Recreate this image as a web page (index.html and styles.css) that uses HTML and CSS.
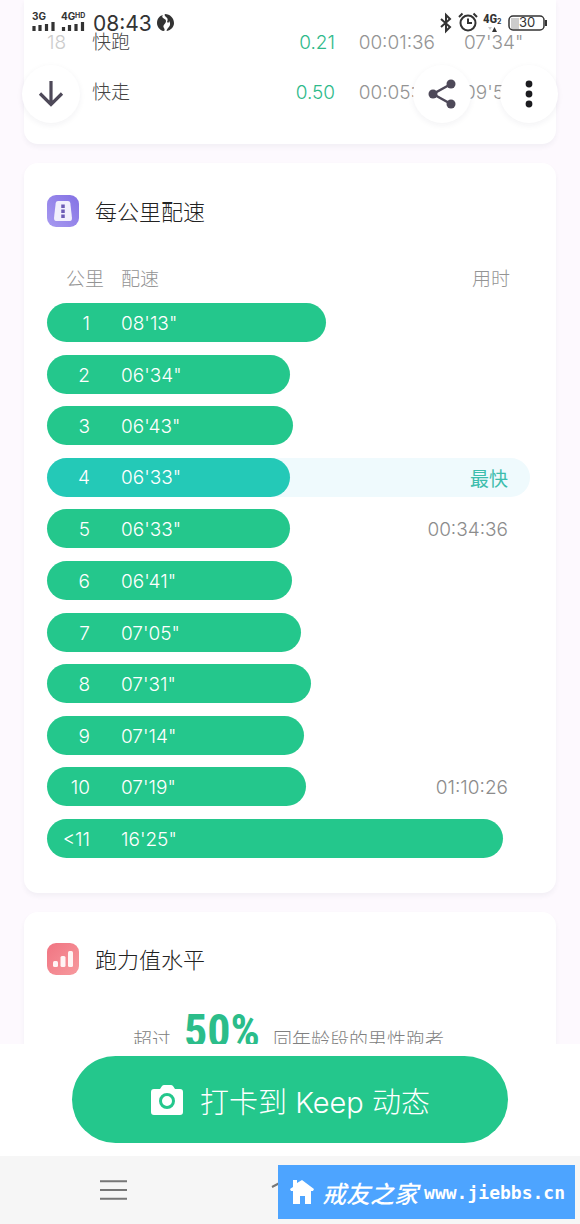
FILE: index.html
```html
<!DOCTYPE html>
<html lang="zh-CN">
<head>
<meta charset="utf-8">
<meta name="viewport" content="width=device-width, initial-scale=1">
<title>每公里配速</title>
<link rel="stylesheet" href="styles.css">
</head>
<body>
<div class="app">
  <header class="status">
    <svg class="signal" viewBox="0 0 56 22" aria-hidden="true">
      <text x="0" y="8" class="signal-text">3G</text>
      <text x="29" y="8" class="signal-text">4G</text>
      <text x="43" y="6" class="signal-sup">HD</text>
      <path d="M2 19v-5M8 19v-6M14.500 19v-7M21 19v-9M31.500 19v-4M37.500 19v-6M44 19v-7M50.500 19v-9" stroke="#333" stroke-width="3.200" stroke-linecap="butt"/>
    </svg>
    <span class="clock">08:43</span>
    <svg class="flame" viewBox="0 0 18 18" aria-hidden="true"><path d="M6 1C2 2 0 5 0 9c0 4 3 7 6 8 2 0 2-1 1-3-2-3 2-4 2-7 0-2-2-2-3-3-1-1-1-2 0-3z" fill="#333"/><path d="M8 0c5 0 9 4 9 9 0 4-3 7-7 8-1 0 0-2 1-3 2-2 3-4 1-7 0 2-1 2-2 1 1-2 1-4-1-5C8 2 7 1 8 0z" fill="#333"/></svg>
    <div class="status-right">
      <svg width="14" height="20" viewBox="0 0 14 20" aria-hidden="true"><path d="M2 6l9 8-4 4V2l4 4-9 8" fill="none" stroke="#333" stroke-width="2"/></svg>
      <svg width="20" height="20" viewBox="0 0 20 20" aria-hidden="true"><g fill="none" stroke="#333" stroke-width="2"><circle cx="10" cy="10" r="7.500"/><path d="M10 5.500V10h4M1 4l3.500-3.500M19 4L15.500.500"/></g></svg>
      <svg width="20" height="20" viewBox="0 0 20 20" aria-hidden="true"><text x="0" y="10" class="net-text">4G</text><text x="14" y="11" class="net-sub">2</text><path d="M9 19l2.500-5 2.500 5z" fill="#333"/><path d="M5 14h4l-2 3z" fill="#ccc"/></svg>
      <svg width="40" height="20" viewBox="0 0 40 20" aria-hidden="true"><rect x="3" y="5" width="8" height="11" fill="#ccc"/><rect x="1" y="3" width="35" height="14" rx="4" fill="none" stroke="#333" stroke-width="1.500"/><path d="M38 7v6" stroke="#333" stroke-width="2"/><text x="11" y="14" class="battery-text">30</text></svg>
    </div>
  </header>

  <nav class="toolbar">
    <button class="round" aria-label="收起"><svg viewBox="0 0 30 30"><path d="M15 2v23M4 14.500l11 11 11-11" fill="none" stroke="#4e4959" stroke-width="3.200"/></svg></button>
    <span class="spacer"></span>
    <button class="round" aria-label="分享"><svg viewBox="0 0 30 30"><path d="M24 5L6 15l18 10" fill="none" stroke="#4e4959" stroke-width="2.500"/><g fill="#4e4959"><circle cx="24" cy="5" r="4.500"/><circle cx="6" cy="15" r="4.500"/><circle cx="24" cy="25" r="4.500"/></g></svg></button>
    <button class="round" aria-label="更多"><svg viewBox="0 0 30 30"><g fill="#1c1c20"><circle cx="15" cy="5" r="3.400"/><circle cx="15" cy="15" r="3.400"/><circle cx="15" cy="25" r="3.400"/></g></svg></button>
  </nav>

  <main class="content">
    <section class="card segments">
      <table class="segment-table">
        <tr><td class="seg-no">18</td><td class="seg-name">快跑</td><td class="seg-km">0.21</td><td class="seg-time">00:01:36</td><td class="seg-pace">07'34"</td></tr>
        <tr><td class="seg-no"></td><td class="seg-name">快走</td><td class="seg-km">0.50</td><td class="seg-time">00:05:21</td><td class="seg-pace">09'56"</td></tr>
      </table>
    </section>

    <section class="card">
      <h2 class="title">
        <svg viewBox="0 0 32 32" aria-hidden="true"><defs><linearGradient id="violet" x1="0" y1="1" x2="1" y2="0"><stop offset="0" stop-color="#a79af0"/><stop offset="1" stop-color="#8471e4"/></linearGradient></defs><rect width="32" height="32" rx="9" fill="url(#violet)"/><path d="M11 6h10q2 0 2.300 2L25 23q0 3-2 3H9q-2 0-2-3L8.700 8Q9 6 11 6z" fill="#f1effc"/><path d="M16 9.500v3.500M16 14.500V18M16 19.500V23" stroke="#6c5cb5" stroke-width="3.500"/></svg>
        <span>每公里配速</span>
      </h2>
      <table class="pace">
        <thead><tr><th class="km">公里</th><th class="speed">配速</th><th class="time">用时</th></tr></thead>
        <tbody>
          <tr><td class="km"><i class="bar" style="width:57.8%"></i>1</td><td class="speed">08'13"</td><td class="time"></td></tr>
          <tr><td class="km"><i class="bar" style="width:50.3%"></i>2</td><td class="speed">06'34"</td><td class="time"></td></tr>
          <tr><td class="km"><i class="bar" style="width:51%"></i>3</td><td class="speed">06'43"</td><td class="time"></td></tr>
          <tr class="fastest"><td class="km"><i class="bar" style="width:50.3%"></i>4</td><td class="speed">06'33"</td><td class="time">最快</td></tr>
          <tr><td class="km"><i class="bar" style="width:50.3%"></i>5</td><td class="speed">06'33"</td><td class="time">00:34:36</td></tr>
          <tr><td class="km"><i class="bar" style="width:50.8%"></i>6</td><td class="speed">06'41"</td><td class="time"></td></tr>
          <tr><td class="km"><i class="bar" style="width:52.6%"></i>7</td><td class="speed">07'05"</td><td class="time"></td></tr>
          <tr><td class="km"><i class="bar" style="width:54.6%"></i>8</td><td class="speed">07'31"</td><td class="time"></td></tr>
          <tr><td class="km"><i class="bar" style="width:53.3%"></i>9</td><td class="speed">07'14"</td><td class="time"></td></tr>
          <tr><td class="km"><i class="bar" style="width:53.7%"></i>10</td><td class="speed">07'19"</td><td class="time">01:10:26</td></tr>
          <tr><td class="km"><i class="bar" style="width:94.5%"></i>&lt;11</td><td class="speed">16'25"</td><td class="time"></td></tr>
        </tbody>
      </table>
    </section>

    <section class="card ability">
      <h2 class="title">
        <svg viewBox="0 0 32 32" aria-hidden="true"><defs><linearGradient id="coral" x1="0" y1="0" x2="1" y2="1"><stop offset="0" stop-color="#f07482"/><stop offset="1" stop-color="#f79a9e"/></linearGradient></defs><rect width="32" height="32" rx="9" fill="url(#coral)"/><g fill="#fff4f4"><rect x="6" y="18" width="5" height="6" rx="1.500"/><rect x="13.500" y="13" width="5" height="11" rx="1.500"/><rect x="21" y="8" width="5" height="16" rx="1.500"/></g></svg>
        <span>跑力值水平</span>
      </h2>
      <p class="level"><span>超过</span><strong>50%</strong><span>同年龄段的男性跑者</span></p>
    </section>
  </main>

  <div class="action">
    <button class="share">
      <svg viewBox="0 0 34 32" aria-hidden="true"><path d="M10 5l2-3q1-1 2-1h7q1 0 2 1l2 3h5q3 0 3 3v20q0 3-3 3H4q-3 0-3-3V8q0-3 3-3z" fill="#fff"/><circle cx="17" cy="17" r="6.500" fill="#fff" stroke="#24c78c" stroke-width="3"/></svg>
      打卡到 Keep 动态
    </button>
  </div>

  <footer class="system">
    <button class="menu" aria-label="菜单"><svg viewBox="0 0 28 22"><path d="M0 2h28M0 11h28M0 20h28" stroke="#777" stroke-width="2"/></svg></button>
    <button class="home" aria-label="主页"><svg viewBox="0 0 36 30"><path d="M1 12L18 3l17 9M9 13v14h18V13" fill="none" stroke="#777" stroke-width="2"/></svg></button>
    <a class="site" href="#">
      <svg viewBox="0 0 26 26" aria-hidden="true"><path d="M13 1l12 9-1 2h-2v13h-6v-8h-5v8H4V12H2l-1-2 3-2V1h4v3z" fill="#fff"/></svg>
      <span class="site-name">戒友之家</span><span class="site-url">www.jiebbs.cn</span>
    </a>
  </footer>
</div>
</body>
</html>
```
FILE: styles.css
```css
* { box-sizing: border-box; }

body {
  margin: 0;
  font-family: Inter, "Noto Sans CJK SC", sans-serif;
  font-weight: 300;
  color: #222;
  background: #fdf9fe;
}

button {
  border: 0;
  padding: 0;
  font: inherit;
  background: none;
}

.app {
  position: relative;
  display: flex;
  flex-direction: column;
  height: 100vh;
}

.status {
  position: absolute;
  z-index: 3;
  top: 12px;
  left: 32px;
  right: 32px;
  display: flex;
  align-items: center;
  height: 22px;
}

.status svg { overflow: visible; }
.signal { width: 56px; height: 22px; }
.signal-text { font: 700 10px Inter, sans-serif; fill: #333; }
.signal-sup { font: 700 7px Inter, sans-serif; fill: #333; }
.net-text { font: 700 13px "Roboto Condensed", "Liberation Sans Narrow", sans-serif; fill: #333; }
.net-sub { font: 700 7px Inter, sans-serif; fill: #333; }
.battery-text { font: 400 13px Inter, sans-serif; fill: #333; }

.clock {
  margin-left: 5px;
  font-size: 21px;
  font-weight: 400;
  color: #333;
}

.flame { width: 18px; height: 18px; margin-left: 5px; }

.status-right {
  display: flex;
  align-items: center;
  gap: 5px;
  margin-left: auto;
}

.toolbar {
  position: absolute;
  z-index: 2;
  top: 65px;
  left: 22px;
  right: 22px;
  display: flex;
  gap: 29px;
}

.spacer { flex: 1; }

.round {
  display: grid;
  place-items: center;
  width: 58px;
  height: 58px;
  border-radius: 50%;
  background: #fff;
  box-shadow: 0 2px 6px rgba(40, 30, 60, 0.06);
}

.round svg { width: 30px; height: 30px; }

.content {
  flex: 1;
  min-height: 0;
  overflow: hidden;
  display: flex;
  flex-direction: column;
  gap: 19px;
  padding: 0 24px;
}

.card {
  flex: none;
  padding: 32px 26px 35px 23px;
  border-radius: 14px;
  background: #fff;
  box-shadow: 0 3px 5px rgba(40, 50, 70, 0.05);
}

.segments {
  padding: 17px 26px 27px 23px;
  border-radius: 0 0 14px 14px;
}

.ability { padding-top: 31px; }

.segment-table {
  width: 100%;
  table-layout: fixed;
  border-collapse: collapse;
  font-size: 19px;
  color: #949494;
}

.segment-table tr { height: 50px; }
.segment-table td { padding: 0; white-space: nowrap; }
.segment-table .seg-no { width: 45px; color: #ccc; }
.segment-table .seg-name { padding-bottom: 4px; color: #444; }
.seg-km { width: 60px; text-align: right; color: #2fba8b; }
.seg-time { width: 100px; text-align: right; }
.seg-pace { width: 95px; }
.segment-table .seg-pace { padding-left: 29px; }

.title {
  display: flex;
  align-items: center;
  gap: 16px;
  height: 32px;
  margin: 0;
  font-size: 22px;
  font-weight: 300;
}

.title svg { width: 32px; height: 32px; }
.title span { padding-bottom: 3px; }

.pace {
  display: block;
  margin-top: 36px;
  font-size: 19px;
}

.pace thead { display: block; margin-bottom: 12px; color: #949494; }

.pace tbody {
  display: flex;
  flex-direction: column;
  justify-content: space-between;
  height: 555px;
}

.pace tr {
  position: relative;
  z-index: 0;
  display: grid;
  grid-template-columns: 43px 1fr 1fr;
  column-gap: 31px;
  align-items: center;
  height: 39px;
  padding-top: 2px;
  border-radius: 20px;
}

.pace thead tr {
  grid-template-columns: 57px 1fr 1fr;
  column-gap: 17px;
  height: 28px;
  padding-top: 0;
}

.pace th, .pace td { padding: 0; font-weight: 300; }
.km { text-align: right; color: #fff; }
.speed { text-align: left; color: #fff; }
.pace thead .km, .pace thead .speed { color: #949494; }
.pace .time { padding-right: 22px; text-align: right; color: #8c8c8c; }
.pace thead .time { padding-right: 20px; color: #949494; }

.bar {
  position: absolute;
  z-index: -1;
  top: 0;
  left: 0;
  height: 100%;
  border-radius: 20px;
  background: #24c78c;
}

.pace .fastest { padding-top: 0; background: #effafd; }
.fastest .bar { background: #24c9b7; }
.pace .fastest .time { color: #3dbdac; font-weight: 400; }

.level {
  display: flex;
  justify-content: center;
  align-items: baseline;
  gap: 13px;
  margin: 28px 0 0;
  font-size: 19px;
  line-height: 56px;
  color: #808080;
}

.level strong {
  font-family: "Roboto Condensed", "Liberation Sans Narrow", Roboto, sans-serif;
  font-size: 46px;
  font-weight: 700;
  color: #2bbd8a;
}

.action {
  display: flex;
  padding: 12px 72px 13px;
  background: #fff;
}

.share {
  flex: 1;
  display: flex;
  justify-content: center;
  align-items: center;
  gap: 16px;
  height: 87px;
  border-radius: 44px;
  font-size: 29px;
  color: #fff;
  background: #24c78c;
}

.share svg { width: 34px; height: 32px; }

.system {
  position: relative;
  display: flex;
  align-items: center;
  height: 68px;
  padding-left: 100px;
  background: #f6f6f6;
}

.menu svg { display: block; width: 27px; height: 22px; }
.home { margin-left: 144px; }
.home svg { display: block; width: 36px; height: 30px; }

.site {
  position: absolute;
  right: 5px;
  bottom: 5px;
  display: flex;
  align-items: center;
  height: 54px;
  padding: 0 10px 0 11px;
  color: #fff;
  text-decoration: none;
  background: #4da4ff;
}

.site svg { width: 26px; height: 26px; margin-right: 7px; }
.site-name { margin-right: 6px; font-size: 24px; font-weight: 500; font-style: italic; }
.site-url { font: 700 18px "DejaVu Sans Mono", monospace; }
```
